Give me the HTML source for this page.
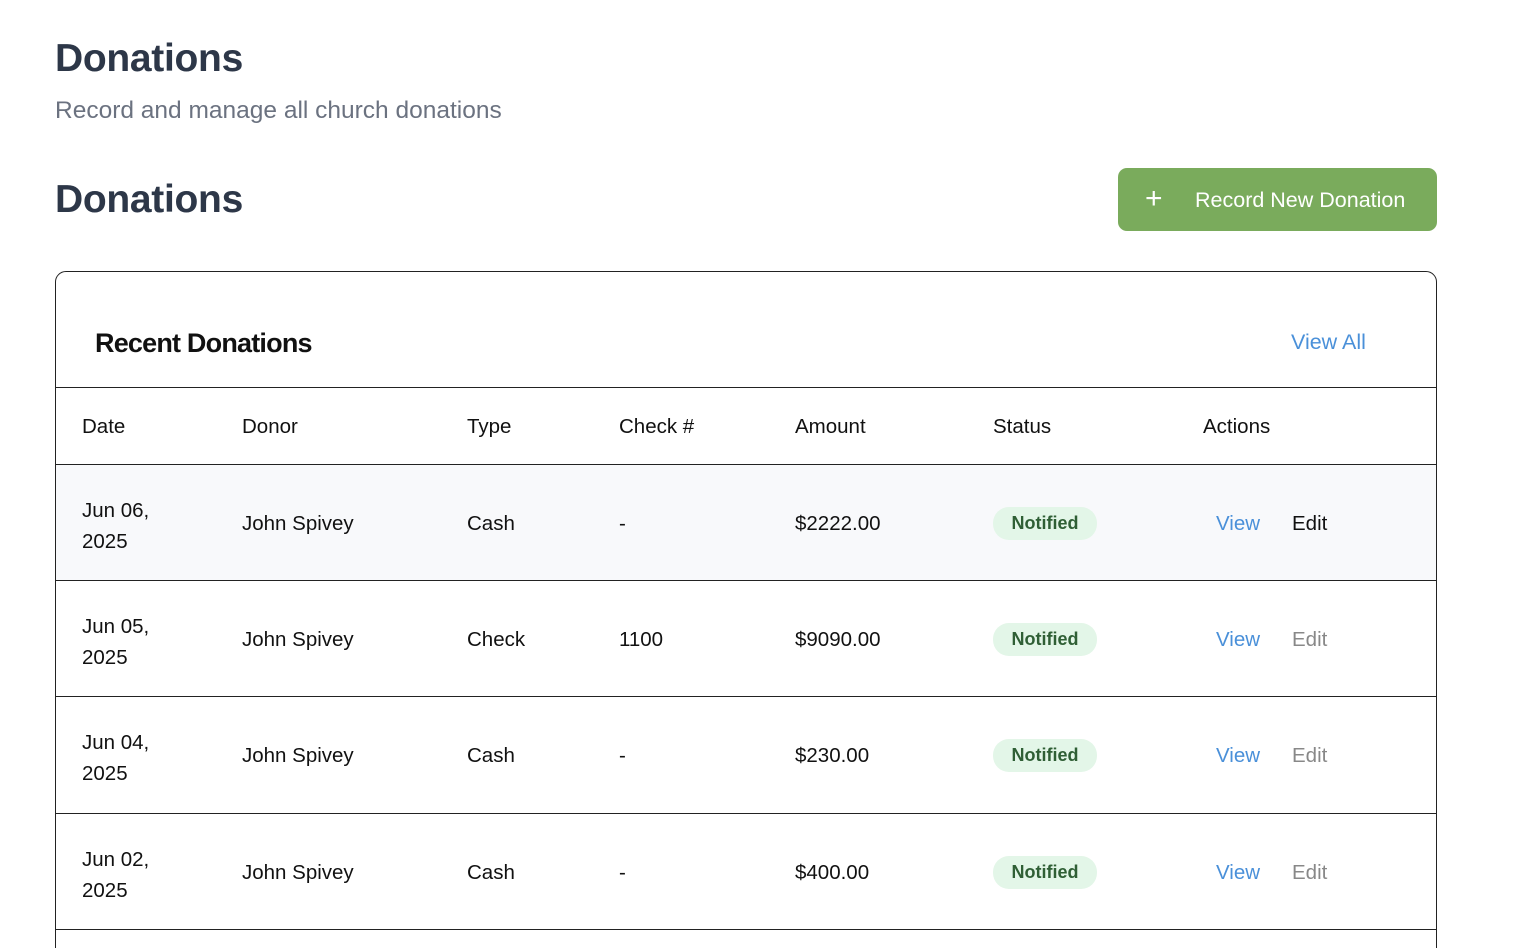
<!DOCTYPE html>
<html><head><style>
*{margin:0;padding:0;box-sizing:border-box}
html,body{width:1516px;height:948px;overflow:hidden}
body{background:#fff;font-family:"Liberation Sans",sans-serif;position:relative;color:#111}
.a{position:absolute;white-space:nowrap}
h1{position:absolute;left:55px;font-size:39px;font-weight:bold;color:#2d3748;letter-spacing:-0.3px}
.card{position:absolute;left:55px;top:271px;width:1382px;height:720px;border:1px solid #222;border-radius:11px;overflow:hidden}
.line{position:absolute;left:0;width:100%;height:1px;background:#222}
.row{position:absolute;left:0;width:100%;height:116px}
.t{position:absolute;font-size:20.5px;white-space:nowrap}
.badge{position:absolute;background:#e3f6e8;color:#2f5f35;font-weight:bold;font-size:18px;border-radius:16px;width:104px;height:33px;line-height:33px;text-align:center}
.blue{color:#4a90d9}.grey{color:#888}
</style></head><body>
<h1 style="top:37px">Donations</h1>
<div class="a" style="left:55px;top:97px;font-size:24.5px;color:#6b7280">Record and manage all church donations</div>
<h1 style="top:178px">Donations</h1>
<div class="a" style="left:1118px;top:168px;width:319px;height:63px;background:#7aab5c;border-radius:9px;color:#fff;font-size:21.5px">
<span style="position:absolute;left:27px;top:16px;font-size:30px;font-weight:200;line-height:30px">+</span>
<span style="position:absolute;left:77px;top:20px">Record New Donation</span></div>
<div class="card">
<div class="t" style="left:39px;top:56px;font-size:27px;font-weight:bold;letter-spacing:-0.8px">Recent Donations</div>
<div class="t blue" style="left:1235px;top:58px;font-size:21.5px">View All</div>
<div class="line" style="top:115px"></div>
<div class="t" style="left:26px;top:143px">Date</div>
<div class="t" style="left:186px;top:143px">Donor</div>
<div class="t" style="left:411px;top:143px">Type</div>
<div class="t" style="left:563px;top:143px">Check #</div>
<div class="t" style="left:739px;top:143px">Amount</div>
<div class="t" style="left:937px;top:143px">Status</div>
<div class="t" style="left:1147px;top:143px">Actions</div>
<div class="line" style="top:192px"></div>

<div class="row" style="top:193px;background:#f8f9fb">
<div class="t" style="left:26px;top:30px;line-height:31px">Jun 06,<br>2025</div>
<div class="t" style="left:186px;top:47px">John Spivey</div><div class="t" style="left:411px;top:47px">Cash</div><div class="t" style="left:563px;top:47px">-</div><div class="t" style="left:739px;top:47px">$2222.00</div>
<div class="badge" style="left:937px;top:42px">Notified</div>
<div class="t blue" style="left:1160px;top:47px">View</div><div class="t" style="left:1236px;top:47px">Edit</div></div>
<div class="line" style="top:308px"></div>

<div class="row" style="top:309px">
<div class="t" style="left:26px;top:30px;line-height:31px">Jun 05,<br>2025</div>
<div class="t" style="left:186px;top:47px">John Spivey</div><div class="t" style="left:411px;top:47px">Check</div><div class="t" style="left:563px;top:47px">1100</div><div class="t" style="left:739px;top:47px">$9090.00</div>
<div class="badge" style="left:937px;top:42px">Notified</div>
<div class="t blue" style="left:1160px;top:47px">View</div><div class="t grey" style="left:1236px;top:47px">Edit</div></div>
<div class="line" style="top:424px"></div>

<div class="row" style="top:425px">
<div class="t" style="left:26px;top:30px;line-height:31px">Jun 04,<br>2025</div>
<div class="t" style="left:186px;top:47px">John Spivey</div><div class="t" style="left:411px;top:47px">Cash</div><div class="t" style="left:563px;top:47px">-</div><div class="t" style="left:739px;top:47px">$230.00</div>
<div class="badge" style="left:937px;top:42px">Notified</div>
<div class="t blue" style="left:1160px;top:47px">View</div><div class="t grey" style="left:1236px;top:47px">Edit</div></div>
<div class="line" style="top:541px"></div>

<div class="row" style="top:542px">
<div class="t" style="left:26px;top:30px;line-height:31px">Jun 02,<br>2025</div>
<div class="t" style="left:186px;top:47px">John Spivey</div><div class="t" style="left:411px;top:47px">Cash</div><div class="t" style="left:563px;top:47px">-</div><div class="t" style="left:739px;top:47px">$400.00</div>
<div class="badge" style="left:937px;top:42px">Notified</div>
<div class="t blue" style="left:1160px;top:47px">View</div><div class="t grey" style="left:1236px;top:47px">Edit</div></div>
<div class="line" style="top:657px"></div>
</div>
</body></html>
